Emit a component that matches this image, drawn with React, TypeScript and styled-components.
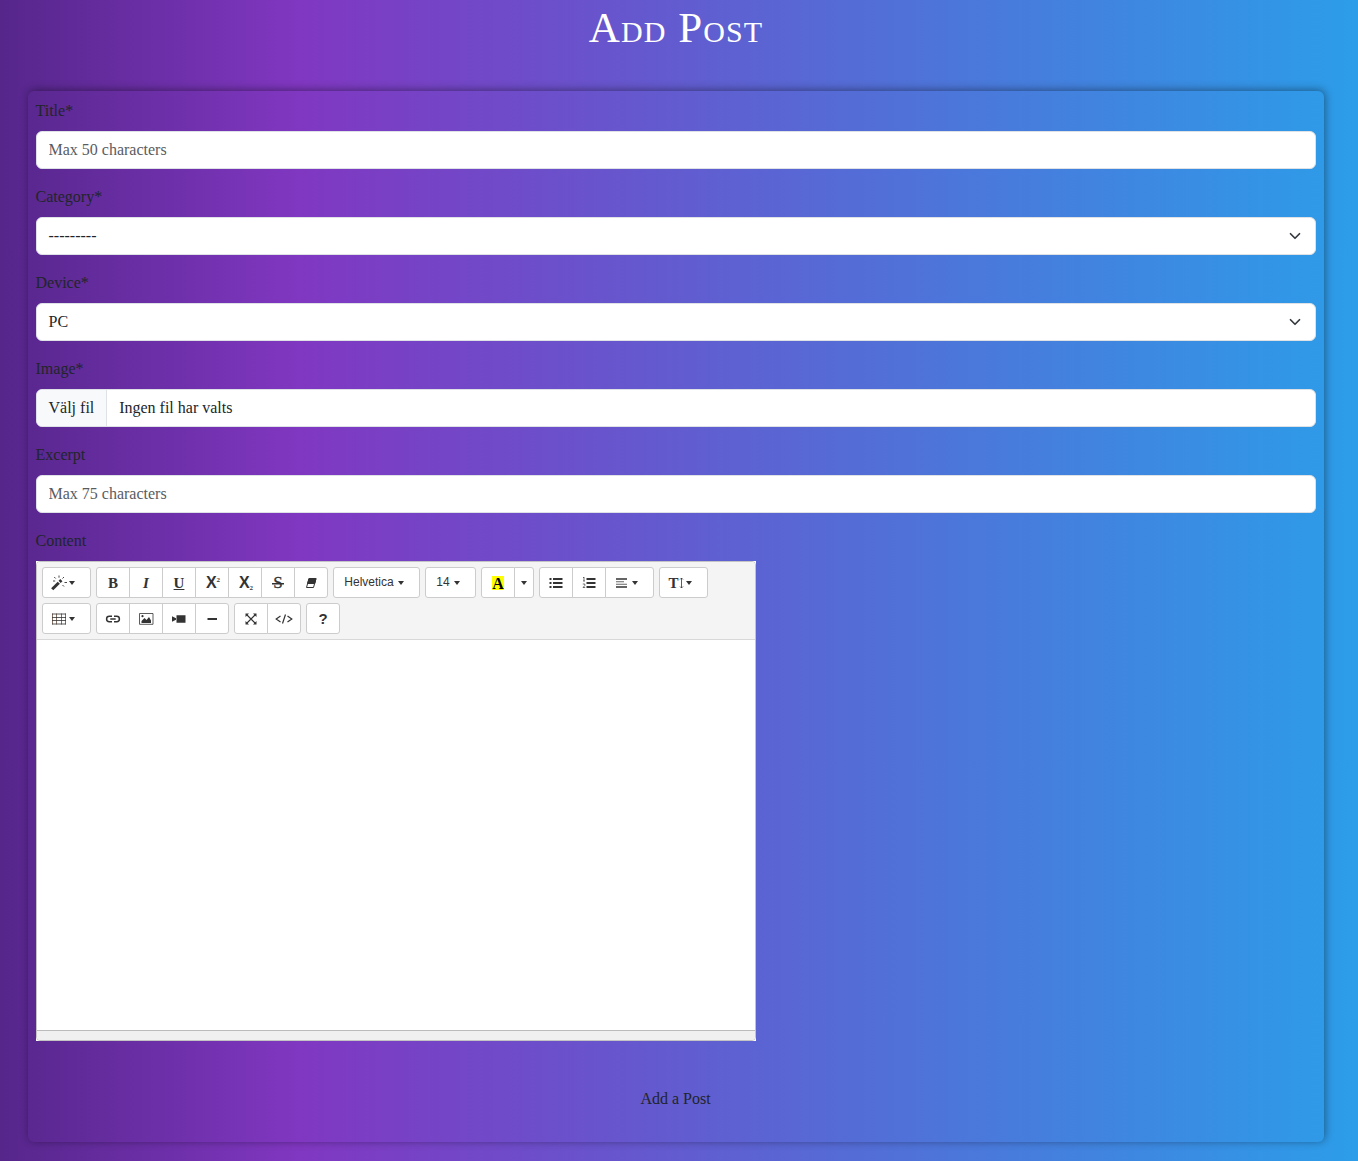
import React from "react";
import styled, { createGlobalStyle, css } from "styled-components";

const Global = createGlobalStyle`
  *, *::before, *::after { box-sizing: border-box; }
  body {
    margin: 0;
    font-family: "Liberation Serif", "Times New Roman", serif;
    font-size: 16px;
    line-height: 24px;
    color: #212529;
  }
`;

const Page = styled.main`
  min-height: 1161px;
  padding: 0 34px 0 28px;
  background: linear-gradient(to right, #56268b 0%, #8037c1 22%, #2c9de9 100%);
`;

const Heading = styled.h1`
  margin: 0;
  height: 91px;
  padding-top: 3px;
  text-align: center;
  color: #fff;
  font-size: 43px;
  font-weight: 400;
  line-height: 50px;
  font-variant: small-caps;
  letter-spacing: 1.1px;
`;

const Card = styled.form`
  height: 1051px;
  padding: 8px;
  border-radius: 6px;
  box-shadow: 1px -1px 8px rgba(0, 0, 0, 0.42);
`;

const Field = styled.div`
  margin-bottom: 16px;
`;

const Label = styled.label`
  display: block;
  margin-bottom: 8px;
  text-indent: -0.5px;
`;

const controlBox = css`
  display: flex;
  align-items: center;
  width: 100%;
  height: 38px;
  border: 1px solid #dee2e6;
  border-radius: 6px;
  background: #fff;
  color: #212529;
  font: 16px/24px "Liberation Serif", "Times New Roman", serif;
`;

const TextInput = styled.input`
  ${controlBox}
  padding: 6px 12px 6px 11.5px;
  &::placeholder { color: #595c5f; opacity: 1; }
`;

const SelectBox = styled.div`
  ${controlBox}
  justify-content: space-between;
  padding: 6px 12px 6px 11.5px;
`;

const FileBox = styled.div`
  ${controlBox}
  overflow: hidden;
`;

const FileButton = styled.span`
  height: 100%;
  padding: 6px 11.5px;
  border-right: 1px solid #dee2e6;
  background: #f8f9fa;
`;

const FileName = styled.span`
  padding: 0 12.4px;
`;

const EditorFrame = styled.div`
  width: 720px;
  height: 480px;
  background: #fff;
`;

const Editor = styled.div`
  display: flex;
  flex-direction: column;
  height: 100%;
  border: 1px solid #c4c4c4;
  border-radius: 4px;
  overflow: hidden;
`;

const Toolbar = styled.div`
  display: flex;
  flex-direction: column;
  gap: 5px;
  height: 78px;
  padding: 5px;
  border-bottom: 1px solid #d8d8d8;
  background: #f4f4f4;
`;

const ToolRow = styled.div`
  display: flex;
  gap: 5px;
`;

const Group = styled.div`
  display: flex;
`;

const Tool = styled.button<{ $w?: number; $text?: boolean; $menu?: boolean }>`
  display: flex;
  align-items: center;
  justify-content: center;
  width: ${(p) => p.$w ?? 34}px;
  height: 31px;
  padding: ${(p) => (p.$text ? "0 5px 2px 0" : p.$menu ? "1px 7px 0 0" : "1px 0 0")};
  border: 1px solid #ccc;
  background: #fff;
  color: #333;
  font: 12px/18px "Liberation Sans", Arial, sans-serif;
  & + & { margin-left: -1px; }
  &:first-child { border-top-left-radius: 3px; border-bottom-left-radius: 3px; }
  &:last-child { border-top-right-radius: 3px; border-bottom-right-radius: 3px; }
`;

const Caret = styled.span<{ $gap?: number }>`
  margin-left: ${(p) => p.$gap ?? 4}px;
  border-top: 4px solid #333;
  border-left: 3px solid transparent;
  border-right: 3px solid transparent;
`;

const TextCaret = styled(Caret)`
  margin-top: 2px;
`;

const Glyph = styled.span<{ $italic?: boolean; $line?: "underline"; $sans?: boolean }>`
  font-family: ${(p) => (p.$sans ? '"Liberation Sans", Arial, sans-serif' : '"Liberation Serif", serif')};
  font-size: 15px;
  font-weight: 700;
  font-style: ${(p) => (p.$italic ? "italic" : "normal")};
  text-decoration: ${(p) => p.$line ?? "none"};
  text-decoration-thickness: 1px;
`;

const Struck = styled.span`
  padding: 0 1.5px;
  font: 400 17px/18px "Liberation Serif", serif;
  -webkit-text-stroke: 0.3px #333;
  background: linear-gradient(#333, #333) center 9px / 100% 1.5px no-repeat;
`;

const ScriptBase = styled(Glyph)`
  margin-left: 2px;
  font-size: 16px;
`;

const Script = styled.span<{ $up?: boolean }>`
  align-self: ${(p) => (p.$up ? "flex-start" : "flex-end")};
  margin: ${(p) => (p.$up ? "7px 0 0 0" : "0 0 5px 0")};
  font: 700 7px/8px "Liberation Serif", serif;
`;

const Marked = styled.span`
  width: 12px;
  height: 14px;
  background: #ff0;
  color: #000;
  text-align: center;
  font: 700 16px/15px "Liberation Serif", serif;
`;

const Writing = styled.div`
  flex: 1;
  background: #fff;
`;

const StatusBar = styled.div`
  height: 10px;
  border-top: 1px solid #bbb;
  background: #f0f0f0;
`;

const Submit = styled.button`
  display: block;
  margin: 46px auto 0;
  padding: 0 1px 0 0;
  border: 0;
  background: none;
  color: #212529;
  font: 16px/24px "Liberation Serif", serif;
`;

const Icon = ({ children, w = 16, h = 14 }: { children: React.ReactNode; w?: number; h?: number }) => (
  <svg width={w} height={h} viewBox={`0 0 ${w} ${h}`} fill="none" stroke="#333" strokeWidth="1">
    {children}
  </svg>
);

const Chevron = () => (
  <svg width="16" height="12" viewBox="0 0 16 16" preserveAspectRatio="xMidYMid meet" fill="none">
    <path d="m2 5 6 6 6-6" stroke="#343a40" strokeWidth="2.3" strokeLinecap="round" strokeLinejoin="round" />
  </svg>
);

const Wand = () => (
  <Icon w={17} h={16}>
    <path d="M1.2 14.3 7.8 7.7" strokeWidth="3" />
    <path d="m8.6 6.9 1.8-1.8" strokeWidth="3" />
    <path d="M8 .5v2.2M3.2 2l1.5 1.5M2 6h2.2M13 2l-1.5 1.5M13.5 7.5H16M11.5 10l1.5 1.5" strokeWidth=".9" />
  </Icon>
);

const Eraser = () => (
  <Icon w={12} h={12}>
    <path d="M4 1.5h7L8.5 10.5h-7z" />
    <path d="M4 1.5h7L9.8 6.5H2.6z" fill="#333" />
  </Icon>
);

const Bullets = () => (
  <Icon>
    <path d="M5 3h9.5M5 7h9.5M5 11h9.5" strokeWidth="2" />
    <path d="M1.5 3h2M1.5 7h2M1.5 11h2" strokeWidth="2" />
  </Icon>
);

const Numbers = () => (
  <Icon>
    <path d="M5.5 3h9M5.5 7h9M5.5 11h9" strokeWidth="2" />
    <path d="M2 2 3 1v4M2 5h2M1.8 8h2v1.5L2 11.5h2.2" strokeWidth=".7" />
  </Icon>
);

const Align = () => (
  <Icon w={14}>
    <path d="M1 3h11M1 11h11" strokeWidth="1.3" />
    <path d="M1 5.7h8M1 8.3h11" strokeWidth="1.1" opacity=".75" />
  </Icon>
);

const TextHeight = () => (
  <Icon w={5} h={12}>
    <path d="M2.5 1v10M1 2.5 2.5 1 4 2.5M1 9.5 2.5 11 4 9.5" strokeWidth=".8" />
  </Icon>
);

const Table = () => (
  <Icon>
    <path d="M1.5 1.5v11M14.5 1.5v11M5.5 1.5v11M10.5 1.5v11" stroke="#765f50" strokeWidth=".9" />
    <path d="M1 2h14M1 5.5h14M1 8.5h14M1 12h14" strokeWidth=".8" />
  </Icon>
);

const Link = () => (
  <Icon>
    <path d="M7 9.7H4.3a2.7 2.7 0 0 1 0-5.4H7M9 4.3h2.7a2.7 2.7 0 0 1 0 5.4H9M5.3 7h5.4" strokeWidth="1.5" />
  </Icon>
);

const Picture = () => (
  <Icon>
    <path d="M1.5 1.5h13.5v10.8h-13.5z" strokeWidth=".8" />
    <path d="M3.5 11V9l3-3 2 2 2.5-3 2 3.5V11z" fill="#333" stroke="none" />
    <circle cx="4.5" cy="4.2" r="1.1" fill="#333" stroke="none" />
  </Icon>
);

const Video = () => (
  <Icon>
    <path d="M5.5 3.2h9v7.6h-9zM1 4.2 5 6.2v1.6l-4 2z" fill="#333" stroke="none" />
  </Icon>
);

const Minus = () => (
  <Icon>
    <path d="M3.5 7h9.5" strokeWidth="1.8" />
  </Icon>
);

const Expand = () => (
  <Icon>
    <path d="m3.5 2.5 9 9M12.5 2.5l-9 9" strokeWidth="1.1" />
    <path d="M2.5 1.5H6L2.5 5zM13.5 1.5V5L10 1.5zM2.5 12.5V9L6 12.5zM13.5 12.5H10L13.5 9z" fill="#333" stroke="none" />
  </Icon>
);

const Code = () => (
  <Icon w={18}>
    <path d="M5.5 4 1.2 7l4.3 3M12.5 4l4.3 3-4.3 3M10.5 2.5l-3 9" strokeWidth="1.2" />
  </Icon>
);

export default function App() {
  return (
    <>
      <Global />
      <Page>
        <Heading>Add Post</Heading>
        <Card>
          <Field>
            <Label>Title*</Label>
            <TextInput placeholder="Max 50 characters" />
          </Field>
          <Field>
            <Label>Category*</Label>
            <SelectBox>--------- <Chevron /></SelectBox>
          </Field>
          <Field>
            <Label>Device*</Label>
            <SelectBox>PC <Chevron /></SelectBox>
          </Field>
          <Field>
            <Label>Image*</Label>
            <FileBox>
              <FileButton>Välj fil</FileButton>
              <FileName>Ingen fil har valts</FileName>
            </FileBox>
          </Field>
          <Field>
            <Label>Excerpt</Label>
            <TextInput placeholder="Max 75 characters" />
          </Field>
          <Label>Content</Label>
          <EditorFrame>
            <Editor>
              <Toolbar>
                <ToolRow>
                  <Group><Tool $w={49} $menu><Wand /><Caret $gap={1} /></Tool></Group>
                  <Group>
                    <Tool><Glyph>B</Glyph></Tool>
                    <Tool><Glyph $italic>I</Glyph></Tool>
                    <Tool><Glyph $line="underline">U</Glyph></Tool>
                    <Tool><ScriptBase $sans>X</ScriptBase><Script $up>2</Script></Tool>
                    <Tool><ScriptBase $sans>X</ScriptBase><Script>2</Script></Tool>
                    <Tool><Struck>S</Struck></Tool>
                    <Tool><Eraser /></Tool>
                  </Group>
                  <Group><Tool $w={87} $text>Helvetica<TextCaret /></Tool></Group>
                  <Group><Tool $w={51} $text>14<TextCaret /></Tool></Group>
                  <Group>
                    <Tool><Marked>A</Marked></Tool>
                    <Tool $w={20}><Caret $gap={0} /></Tool>
                  </Group>
                  <Group>
                    <Tool><Bullets /></Tool>
                    <Tool><Numbers /></Tool>
                    <Tool $w={49} $menu><Align /><Caret $gap={3} /></Tool>
                  </Group>
                  <Group><Tool $w={49} $menu><Glyph>T</Glyph><TextHeight /><Caret $gap={2} /></Tool></Group>
                </ToolRow>
                <ToolRow>
                  <Group><Tool $w={49} $menu><Table /><Caret $gap={2} /></Tool></Group>
                  <Group>
                    <Tool><Link /></Tool>
                    <Tool><Picture /></Tool>
                    <Tool><Video /></Tool>
                    <Tool><Minus /></Tool>
                  </Group>
                  <Group>
                    <Tool><Expand /></Tool>
                    <Tool><Code /></Tool>
                  </Group>
                  <Group><Tool><Glyph $sans>?</Glyph></Tool></Group>
                </ToolRow>
              </Toolbar>
              <Writing />
              <StatusBar />
            </Editor>
          </EditorFrame>
          <Submit type="button">Add a Post</Submit>
        </Card>
      </Page>
    </>
  );
}
